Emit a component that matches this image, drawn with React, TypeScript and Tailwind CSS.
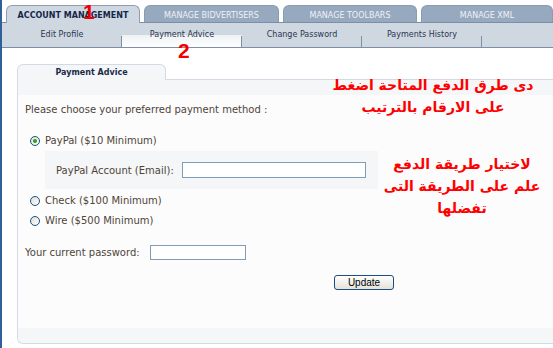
import React from "react"

const topTabs = [
  { label: "ACCOUNT MANAGEMENT", w: "w-[134px]", active: true },
  { label: "MANAGE BIDVERTISERS", w: "w-[135px]", active: false },
  { label: "MANAGE TOOLBARS", w: "w-[134px]", active: false },
  { label: "MANAGE XML", w: "flex-1", active: false },
]

const subTabs = ["Edit Profile", "Payment Advice", "Change Password", "Payments History"]

function Radio({ checked }: { checked?: boolean }) {
  return (
    <span className="flex h-[10px] w-[10px] items-center justify-center rounded-full border border-[#1c5180] bg-gradient-to-br from-[#dcdcd7] to-white">
      {checked && <span className="h-[4px] w-[4px] rounded-full bg-[#21a121]" />}
    </span>
  )
}

export default function App() {
  const body = "font-['DejaVu_Sans',Verdana,sans-serif] text-[10px] text-[#4f4437]"

  return (
    <div className="relative h-[348px] w-[553px] overflow-hidden border-l-2 border-[#30609a] bg-white font-['DejaVu_Sans',Verdana,sans-serif]">
      {/* top tabs */}
      <div className="flex h-[22px] items-end gap-[4px] pl-[4px]">
        {topTabs.map((t) => (
          <div
            key={t.label}
            className={
              t.active
                ? `${t.w} relative z-10 -mb-px flex h-[18px] items-center justify-center rounded-t-[6px] border-x border-t border-[#8f9fb3] bg-[#cfd8e1] pt-[3px] text-[8px] font-bold text-[#15264a]`
                : `${t.w} flex h-[17px] items-center justify-center rounded-t-[6px] border-x border-t border-[#8a9cb2] bg-[#97a9be] pt-[3px] text-[8px] text-[#eef2f6]`
            }
          >
            {t.label}
          </div>
        ))}
      </div>

      {/* sub nav */}
      <div className="flex h-[26px] border-y border-[#7d8fa6] bg-[#cfd8e1]">
        {subTabs.map((s, i) => (
          <div
            key={s}
            className={`relative flex w-[120px] justify-center pt-[7px] text-[8px] leading-[10px] text-[#2a3550] ${
              i === 1 ? "bg-[linear-gradient(to_bottom,transparent_12px,#eef1f4_12px,#ffffff_24px)]" : ""
            }`}
          >
            {s}
            <span className="absolute bottom-0 right-0 h-[11px] w-px bg-[#7d8fa6]" />
          </div>
        ))}
      </div>

      {/* panel */}
      <div className="ml-[15px] mt-[16px] flex h-[280px] flex-col">
        <div className="flex h-[16px] items-end">
          <div className="flex h-[16px] w-[149px] items-center justify-center rounded-t-[6px] border-x border-t border-[#d3dae3] bg-[#f4f6f8] text-[8px] font-bold text-[#1d2b4a]">
            Payment Advice
          </div>
          <div className="flex-1 border-b border-[#d3dae3]" />
        </div>
        <div className="flex flex-1 flex-col rounded-bl-[6px] border-b border-l border-[#d3dae3] bg-[#fcfcfd]">
          <div className="h-[15px] bg-[#f4f6f8]" />
          <div className={`flex flex-1 flex-col pl-[7px] ${body}`}>
            <div className="mt-[9px] leading-[12px]">Please choose your preferred payment method :</div>

            <div className="mt-[19px] flex items-center gap-[5px] pl-[5px] leading-[12px]">
              <Radio checked />
              <span>PayPal ($10 Minimum)</span>
            </div>
            <div className="ml-[20px] mt-[4px] flex h-[38px] w-[333px] items-center bg-[#f4f6f8] pl-[11px]">
              <span className="w-[126px] whitespace-nowrap">PayPal Account (Email):</span>
              <input className="h-[16px] w-[184px] border border-[#7f9db9] bg-white outline-none" />
            </div>
            <div className="mt-[6px] flex items-center gap-[5px] pl-[5px] leading-[12px]">
              <Radio />
              <span>Check ($100 Minimum)</span>
            </div>
            <div className="mt-[8px] flex items-center gap-[5px] pl-[5px] leading-[12px]">
              <Radio />
              <span>Wire ($500 Minimum)</span>
            </div>
            <div className="mt-[18px] flex items-center">
              <span className="w-[125px] whitespace-nowrap">Your current password:</span>
              <input type="password" className="h-[15px] w-[96px] border border-[#7f9db9] bg-white outline-none" />
            </div>
            <div className="mt-[15px] pl-[309px]">
              <button className="flex h-[15px] w-[60px] items-center justify-center rounded-[3px] border border-[#1c4e86] bg-gradient-to-b from-white to-[#e4e2d8] font-['Liberation_Sans',Arial,sans-serif] text-[10px] text-black">
                Update
              </button>
            </div>
          </div>
          <div className="h-[15px] rounded-bl-[6px] bg-[#f4f6f8]" />
        </div>
      </div>

      {/* annotations */}
      <span className="absolute left-[81px] top-[1px] z-20 font-['Liberation_Sans',Arial,sans-serif] text-[21px] font-bold leading-none text-[#f20000]">1</span>
      <span className="absolute left-[176px] top-[40px] z-20 font-['Liberation_Sans',Arial,sans-serif] text-[21px] font-bold leading-none text-[#f20000]">2</span>
      <div dir="rtl" className="absolute left-[321px] top-[74px] z-20 w-[220px] whitespace-nowrap text-center font-['DejaVu_Sans',sans-serif] text-[14px] font-bold leading-[22px] text-[#ff0000]">
        <div>دى طرق الدفع المتاحة اضغط</div>
        <div>على الارقام بالترتيب</div>
      </div>
      <div dir="rtl" className="absolute left-[370px] top-[153px] z-20 w-[180px] whitespace-nowrap text-center font-['DejaVu_Sans',sans-serif] text-[14px] font-bold leading-[22px] text-[#ff0000]">
        <div>لاختيار طريقة الدفع</div>
        <div>علم على الطريقة التى</div>
        <div>تفضلها</div>
      </div>
    </div>
  )
}
